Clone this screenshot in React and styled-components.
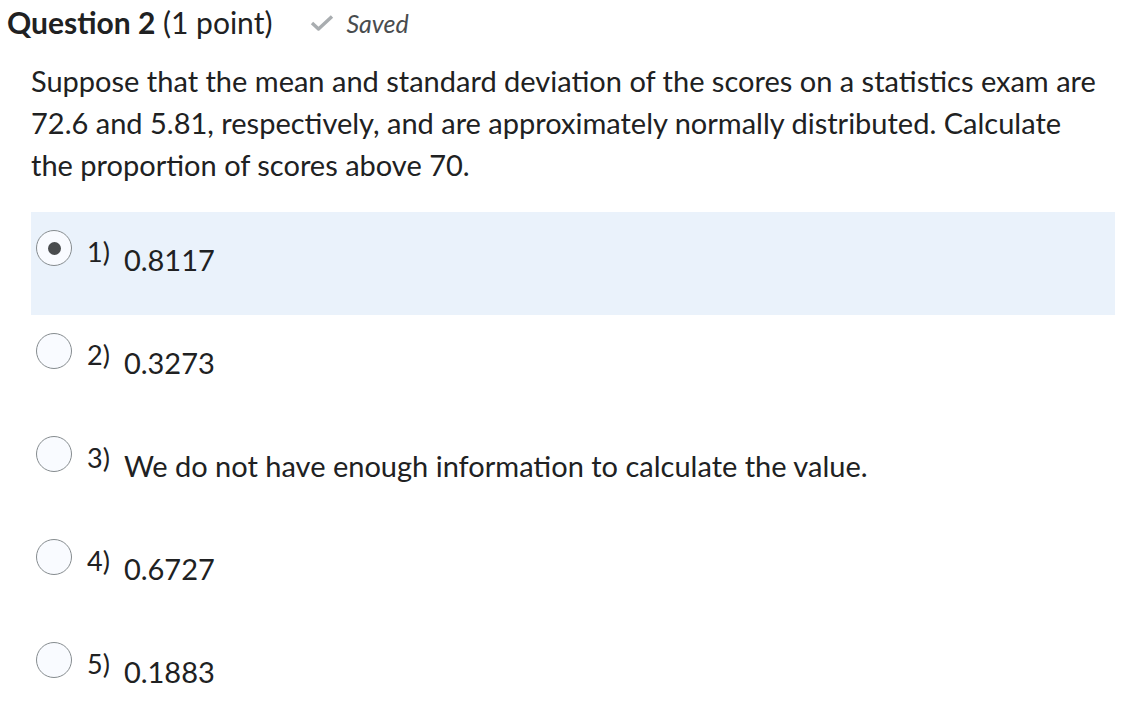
import React, { useState } from "react";
import styled, { createGlobalStyle } from "styled-components";

const GlobalStyle = createGlobalStyle`
  html, body {
    margin: 0;
    padding: 0;
    background: #ffffff;
  }
  body {
    font-family: Lato, "Noto Sans", sans-serif;
    color: #202122;
  }
`;

const options = [
  { id: 1, text: "0.8117" },
  { id: 2, text: "0.3273" },
  { id: 3, text: "We do not have enough information to calculate the value." },
  { id: 4, text: "0.6727" },
  { id: 5, text: "0.1883" },
];

const App = () => {
  const [selected, setSelected] = useState(1);

  return (
    <>
      <GlobalStyle />
      <Page>
        <Header>
          <Title>
            <strong>Question 2</strong> (1 point)
          </Title>
          <SavedBadge>
            <svg width="24" height="16" viewBox="0 0 24 16">
              <path
                d="M2 8 L8.5 14 L22 1.5"
                fill="none"
                stroke="#a9adb0"
                strokeWidth="3.4"
                strokeLinejoin="round"
              />
            </svg>
            <SavedText>Saved</SavedText>
          </SavedBadge>
        </Header>
        <Body>
          <Prompt>
            Suppose that the mean and standard deviation of the scores on a
            statistics exam are 72.6 and 5.81, respectively, and are
            approximately normally distributed. Calculate the proportion of
            scores above 70.
          </Prompt>
          <OptionList>
            {options.map((o) => (
              <Option
                key={o.id}
                $active={selected === o.id}
                onClick={() => setSelected(o.id)}
              >
                <Radio $checked={selected === o.id} />
                <Label>{o.id})</Label>
                <AnswerText>{o.text}</AnswerText>
              </Option>
            ))}
          </OptionList>
        </Body>
      </Page>
    </>
  );
};

const Page = styled.div`
  padding: 2px 12px 0 7px;
`;

const Header = styled.div`
  display: flex;
  align-items: center;
  gap: 38px;
  height: 40px;
`;

const Title = styled.h2`
  margin: 0;
  font-size: 30px;
  font-weight: 400;
  color: #202122;
  strong {
    font-weight: 700;
  }
`;

const SavedBadge = styled.div`
  display: flex;
  align-items: center;
  gap: 12px;
  padding-top: 1px;
`;

const SavedText = styled.span`
  font-size: 25px;
  font-style: italic;
  color: #494c4e;
`;

const Body = styled.div`
  padding-left: 24px;
`;

const Prompt = styled.p`
  max-width: 1075px;
  margin: 18px 0 26px;
  font-size: 29px;
  line-height: 42px;
  color: #202122;
`;

const OptionList = styled.div`
  display: flex;
  flex-direction: column;
`;

const Option = styled.div`
  display: flex;
  align-items: flex-start;
  height: 103px;
  box-sizing: border-box;
  padding: 18px 0 0 5px;
  background: ${(p) => (p.$active ? "#eaf2fb" : "transparent")};
  cursor: pointer;
`;

const Radio = styled.span`
  position: relative;
  flex: none;
  width: 36px;
  height: 36px;
  box-sizing: border-box;
  border-radius: 50%;
  border: 1px solid #868c8f;
  background: #f9fbff;
  margin-right: 15px;
  &::after {
    content: "";
    display: ${(p) => (p.$checked ? "block" : "none")};
    position: absolute;
    left: 50%;
    top: 50%;
    width: 13px;
    height: 13px;
    margin: -6.5px 0 0 -6.5px;
    border-radius: 50%;
    background: #494c4e;
  }
`;

const Label = styled.span`
  font-size: 27px;
  line-height: 30px;
  padding-top: 7px;
  margin-right: 14px;
  color: #202122;
`;

const AnswerText = styled.span`
  font-size: 29px;
  line-height: 34px;
  padding-top: 13px;
  color: #202122;
`;

export default App;
